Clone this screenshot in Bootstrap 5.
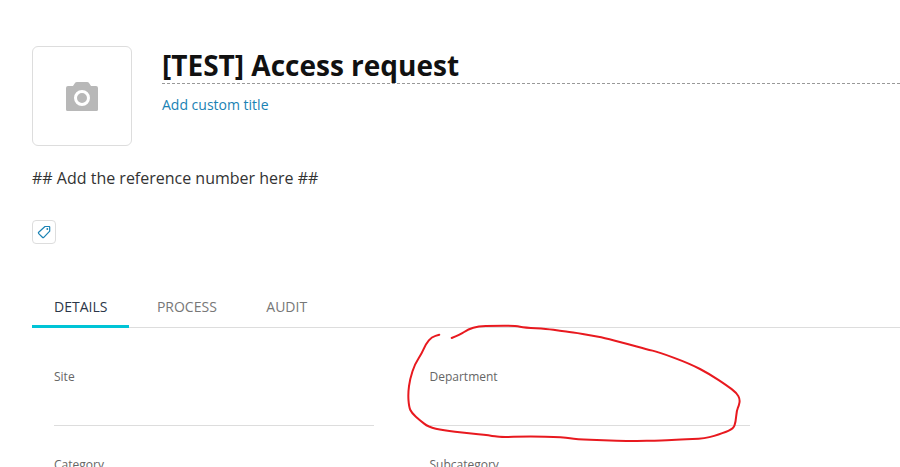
<!DOCTYPE html>
<html lang="en">
<head>
<meta charset="utf-8">
<title>Access request</title>
<link href="https://cdn.jsdelivr.net/npm/bootstrap@5.3.0/dist/css/bootstrap.min.css" rel="stylesheet">
<style>
html,body{height:467px;overflow:hidden;background:#fff}
body{font-family:"Open Sans",sans-serif;color:#333}
.page-wrap{position:relative;padding:46px 0 0 32px;height:467px;overflow:hidden}
.photo-box{width:100px;height:100px;border:1px solid #ddd;border-radius:6px;flex:none}
.head-text{margin-left:30px;flex:1;min-width:0}
.title-line{font-size:28px;font-weight:700;line-height:38px;color:#111;border-bottom:1px dashed #999;height:38px;margin:0;padding-left:0}
.custom-link{display:block;margin-top:11px;font-size:14px;line-height:20px;color:#1a82b4;text-decoration:none}
.ref-text{margin:21px 0 0;font-size:16px;line-height:22px;color:#333}
.tag-btn{width:24px;height:24px;border:1px solid #ddd;border-radius:4px;margin-top:31px;background:#fff;padding:0}
.tabs-row{margin-top:42px;border-bottom:1px solid #ddd;height:42px}
.tab-item{display:block;padding:11px 22px 0;height:42px;font-size:14px;line-height:20px;color:#777;text-decoration:none;text-transform:uppercase}
.tab-item + .tab-item{margin-left:5.500px}
.tab-item.is-on{color:#2b3648;border-bottom:3px solid #00c4d6}
.field-grid{display:grid;grid-template-columns:320px 320px;column-gap:55.500px;padding:40px 0 0 22px}
.field-cell{height:58px;border-bottom:1px solid #ddd;font-size:12px;line-height:17px;color:#666;margin-bottom:30px}
.scribble{position:absolute;left:0;top:0;pointer-events:none}
</style>
</head>
<body>
<div class="page-wrap">
  <div class="d-flex">
    <div class="photo-box d-flex align-items-center justify-content-center">
      <svg width="32" height="29" viewBox="0 0 32 29" aria-hidden="true"><path fill="#b8b8b8" fill-rule="evenodd" d="M7 4 8.800 1.200Q9.500 0 11 0h10q1.500 0 2.200 1.200L25 4h5a2 2 0 0 1 2 2v21.500a1.500 1.500 0 0 1-1.500 1.500h-29A1.500 1.500 0 0 1 0 27.500V6a2 2 0 0 1 2-2zM16 8a8 8 0 1 0 0 16 8 8 0 0 0 0-16zm0 3a5 5 0 1 1 0 10 5 5 0 0 1 0-10z"/></svg>
    </div>
    <div class="head-text">
      <h1 class="title-line">[TEST] Access request</h1>
      <a class="custom-link" href="#">Add custom title</a>
    </div>
  </div>
  <p class="ref-text">## Add the reference number here ##</p>
  <button class="tag-btn d-flex align-items-center justify-content-center" type="button" aria-label="Tags">
    <svg width="16" height="16" viewBox="0 0 16 16" aria-hidden="true"><path fill="none" stroke="#1a82b4" stroke-width="1.200" stroke-linejoin="round" d="M9 2.500h4.200a.5.500 0 0 1 .5.500v4.200L7.800 13.300a1 1 0 0 1-1.400 0L2.700 9.600a1 1 0 0 1 0-1.400z"/><circle cx="11.300" cy="5" r=".9" fill="#1a82b4"/></svg>
  </button>
  <div class="tabs-row d-flex">
    <a class="tab-item is-on" href="#">Details</a>
    <a class="tab-item" href="#">Process</a>
    <a class="tab-item" href="#">Audit</a>
  </div>
  <div class="field-grid">
    <div class="field-cell">Site</div>
    <div class="field-cell">Department</div>
    <div class="field-cell">Category</div>
    <div class="field-cell">Subcategory</div>
  </div>
  <svg class="scribble" width="900" height="467" viewBox="0 0 900 467" aria-hidden="true"><path fill="none" stroke="#e8191f" stroke-width="2" stroke-linecap="round" stroke-linejoin="round" d="M451.700 338Q460 334.700 464.150 332Q468.300 329.300 473.300 327.800Q478.300 326.300 485.800 326Q493.300 325.700 504.150 325.700Q515 325.700 520 326.700Q525 327.700 535.850 328.200Q546.700 328.700 553.350 329.850Q560 331 566 331.600Q572 332.200 582.650 334.100Q593.300 336 598.300 336.850Q603.300 337.700 615 340.700Q626.700 343.700 636.700 346.500Q646.700 349.300 652.500 350.650Q658.300 352 674.150 357.850Q690 363.700 700 369Q710 374.300 718.350 379.800Q726.700 385.300 731.700 389.150Q736.700 393 738.350 396.150Q740 399.300 739.500 402.300Q739 405.300 737.850 407.800Q736.700 410.300 736.200 416.150Q735.700 422 734.500 425.350Q733.300 428.700 728.300 430.850Q723.300 433 714.150 435.850Q705 438.700 692.500 439Q680 439.300 671.650 440Q663.300 440.700 646.650 440.850Q630 441 616.650 440.650Q603.300 440.300 590 439.800Q576.700 439.300 570 438.150Q563.300 437 545 436.650Q526.700 436.300 513.350 436.800Q500 437.300 495 436.300Q490 435.300 478.350 434.150Q466.700 433 455 431.650Q443.300 430.300 435.800 428.650Q428.300 427 424.150 423.650Q420 420.300 415.850 416.650Q411.700 413 410.350 410Q409 407 408.500 400.350Q408 393.700 409 386.200Q410 378.700 412.500 371.200Q415 363.700 418.350 358.700Q421.700 353.700 423.850 348.700Q426 343.700 428.850 340.350Q431.700 337 435.500 335.850L439.300 334.700"/></svg>
</div>
</body>
</html>
